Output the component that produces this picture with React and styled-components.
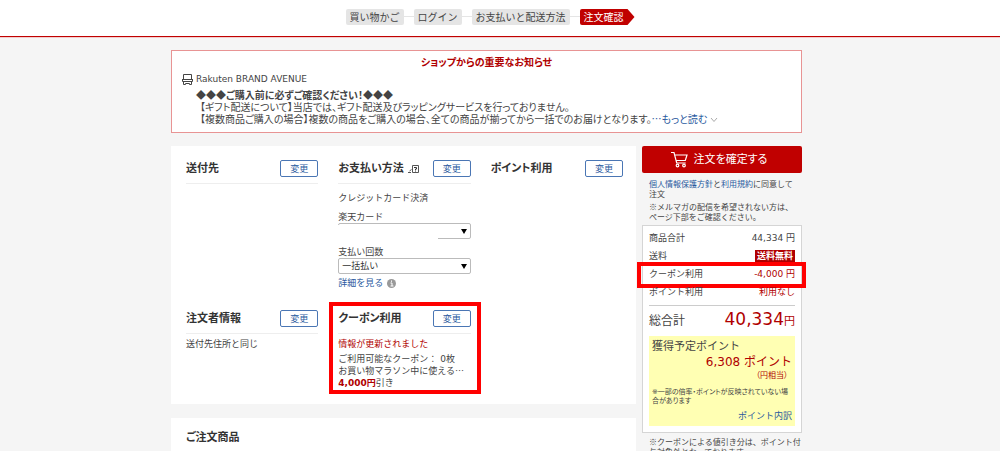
import React from "react";
import styled, { createGlobalStyle } from "styled-components";

const GlobalStyle = createGlobalStyle`
  * {
    box-sizing: border-box;
  }

  body {
    margin: 0;
    background: #f5f5f5;
    color: #444;
    font-family: "DejaVu Sans", "Noto Sans CJK JP", sans-serif;
    font-size: 9px;
    line-height: 12px;
  }

  h2, p, dl, dd, ol {
    margin: 0;
    padding: 0;
  }

  button, select {
    font: inherit;
  }

  a {
    color: #2a5a9e;
    text-decoration: none;
  }
`;

const Page = styled.div`
  height: 100vh;
  overflow: hidden;
`;

const Header = styled.header`
  display: flex;
  justify-content: center;
  height: 37px;
  padding: 9px 20px 0 0;
  background: #fff;
  border-bottom: 1px solid #c00000;
  box-shadow: 0 0 0 1px #f3cccc;
`;

const Steps = styled.ol`
  display: flex;
  list-style: none;
  font-family: "Noto Sans CJK JP", sans-serif;
  font-size: 10px;
  line-height: 16px;
`;

const Step = styled.li`
  display: flex;
  align-items: flex-start;

  & + &::before {
    content: "";
    width: 10px;
    height: 1px;
    margin-top: 7px;
    background: #e5e5e5;
  }
`;

const StepLabel = styled.span`
  padding: 0 4px;
  border-radius: 2px;
  background: #e5e5e5;
`;

const CurrentStep = styled(StepLabel)`
  padding-right: 11px;
  background: #c00000;
  color: #fff;
  clip-path: polygon(0 0, calc(100% - 7px) 0, 100% 50%, calc(100% - 7px) 100%, 0 100%);
`;

// O conteúdo fica um pouco à esquerda do centro
const Content = styled.main`
  max-width: 658px;
  margin: 0 auto;
  padding: 13px 27px 0 0;
`;

const Notice = styled.section`
  padding: 6px 10px 7px;
  border: 1px solid #e89494;
  background: #fff;
`;

const NoticeTitle = styled.h2`
  color: #b00000;
  font-size: 10px;
  line-height: 12px;
  font-feature-settings: "palt";
  text-align: center;
`;

const ShopName = styled.p`
  display: flex;
  align-items: center;
  gap: 3px;
  margin-top: 4px;
`;

const NoticeText = styled.div`
  margin: 4px 0 0 14px;
  font-family: "Noto Sans CJK JP", sans-serif;
  font-size: 10px;
  line-height: 12px;
  font-feature-settings: "palt";
  white-space: nowrap;
`;

const NoticeLine = styled.p`
  padding-left: 4px;
`;

const Columns = styled.div`
  display: grid;
  grid-template-columns: minmax(0, 1fr) 160px;
  gap: 6px;
  align-items: start;
  margin-top: 13px;
`;

const Card = styled.section`
  padding: 14px 13px 14px 15px;
  background: #fff;

  & + & {
    margin-top: 14px;
    padding-top: 12px;
  }
`;

const SettingsGrid = styled.div`
  display: grid;
  grid-template-columns: repeat(3, minmax(0, 1fr));
  grid-template-rows: minmax(150px, auto) minmax(80px, auto);
  column-gap: 20px;
`;

const Setting = styled.section`
  position: relative;
`;

const SettingHead = styled.div`
  display: flex;
  align-items: center;
  gap: 4px;
  padding-bottom: 6px;
  border-bottom: 1px solid ${(props) => (props.$plain ? "transparent" : "#eee")};
`;

const Heading = styled.h2`
  color: #333;
  font-size: 11px;
  line-height: 16px;
  font-feature-settings: "palt";
`;

const ChangeButton = styled.button`
  width: 38px;
  height: 17px;
  margin-left: auto;
  padding: 0;
  border: 1px solid #4a76b4;
  border-radius: 2px;
  background: #fff;
  color: #2a5a9e;
  line-height: 14px;
`;

const Text = styled.p`
  margin-top: ${(props) => props.$top || 0}px;
  white-space: nowrap;
`;

const Ellipsis = styled.span`
  font-family: "Noto Sans CJK JP", sans-serif;
`;

const Field = styled.label`
  display: block;
  margin-top: ${(props) => props.$top}px;
`;

const SelectBox = styled.span`
  display: block;
  position: relative;

  &::after {
    content: "";
    position: absolute;
    top: 6px;
    right: 4px;
    border: 3px solid transparent;
    border-top: 5px solid #000;
    border-bottom: 0;
  }
`;

const Select = styled.select`
  display: block;
  width: 100%;
  height: 16px;
  padding: 0 3px;
  appearance: none;
  border: 1px solid #bbb;
  border-radius: 2px;
  background: #fff;
  color: #333;
`;

// Cobre a parte oculta do cartão
const Mask = styled.span`
  position: absolute;
  top: 2px;
  left: 0;
  width: 100px;
  height: 14px;
  background: #fff;
`;

const DetailLink = styled.a`
  display: inline-flex;
  align-items: center;
  gap: 4px;
  margin-top: 3px;
`;

const Alert = styled.span`
  color: #b00000;
`;

const Highlight = styled.span`
  position: absolute;
  inset: ${(props) => props.$inset};
  border: 4px solid #f00;
  pointer-events: none;
`;

const OrderButton = styled.button`
  display: flex;
  align-items: center;
  justify-content: center;
  gap: 6px;
  width: 100%;
  height: 27px;
  padding: 0 12px 0 6px;
  border: 0;
  border-radius: 2px;
  background: #c00000;
  color: #fff;
  font-size: 11px;
  font-feature-settings: "palt";
`;

const SideText = styled.p`
  margin: ${(props) => props.$top}px 0 0 7px;
  font-family: "Noto Sans CJK JP", sans-serif;
  font-size: 8px;
  line-height: 10px;
`;

const Summary = styled.div`
  margin-top: 3px;
  padding: 3px 6px 6px;
  border: 1px solid #d5d5d5;
  background: #fff;
`;

const SummaryRow = styled.div`
  position: relative;
  display: flex;
  justify-content: space-between;
  align-items: center;
  height: 18px;
`;

const FreeShipping = styled.strong`
  padding: 0 2px;
  background: #b00000;
  color: #fff;
`;

const TotalRow = styled(SummaryRow)`
  height: 30px;
  margin-top: 4px;
  border-top: 1px solid #ccc;
  font-size: 12px;
`;

const Total = styled.span`
  color: #b00000;
  font-size: 17px;

  small {
    font-size: 11px;
  }
`;

const Points = styled.div`
  display: flex;
  flex-direction: column;
  margin-top: 1px;
  padding: 4px 3px;
  background: #ffffb3;
  font-size: 7px;
  line-height: 9px;
`;

const PointsTitle = styled.p`
  font-size: 11px;
  line-height: 14px;
`;

const PointsValue = styled.p`
  color: #b00000;
  font-size: 12px;
  line-height: 17px;
  text-align: right;
`;

const PointsUnit = styled.p`
  padding-right: 4px;
  color: #b00000;
  font-size: 8px;
  line-height: 10px;
  font-feature-settings: "palt";
  text-align: right;
`;

const PointsNote = styled.p`
  margin-top: 7px;
  font-feature-settings: "palt";
`;

const PointsLink = styled.a`
  margin-top: 4px;
  font-size: 9px;
  line-height: 12px;
  text-align: right;
`;

const ShopIcon = () => (
  <svg width="11" height="11" viewBox="0 0 11 11" fill="none" stroke="#444">
    <path d="M1.500 6V.5h8V6M.5 5v2.500h10V5M0 5.500h11M1.500 7.500v3h2v-1h4v1h2v-3" />
  </svg>
);

const HelpIcon = () => (
  <svg width="11" height="10" viewBox="0 0 11 10" fill="none" stroke="#555">
    <path d="M0 8.500h3M1.500 7l2-1.500M4.500 1.500h6v7h-6z" />
    <path d="M6 3.500h2.500v1.500h-1v1M7 7h1" stroke="#333" />
  </svg>
);

const InfoIcon = () => (
  <svg width="9" height="9" viewBox="0 0 9 9">
    <circle cx="4.500" cy="4.500" r="4.500" fill="#999" />
    <path d="M3.500 4h1.500v3M3.500 7h3M4.500 1.500v1.300" stroke="#fff" fill="none" />
  </svg>
);

const CartIcon = () => (
  <svg width="17" height="17" viewBox="0 0 17 17" fill="none" stroke="#fff" strokeWidth="1.200">
    <path d="M0 1.500h3l2.700 10.500h9M3.700 4h12.300l-1.700 5.500H5.200" />
    <circle cx="6.500" cy="14.500" r="1.300" />
    <circle cx="13" cy="14.500" r="1.300" />
  </svg>
);

const ChevronIcon = () => (
  <svg width="8" height="6" viewBox="0 0 8 6" fill="none" stroke="#aaa">
    <path d="M1 1l3 3.500L7 1" />
  </svg>
);

const SettingHeader = ({ title, icon, plain }) => (
  <SettingHead $plain={plain}>
    <Heading>{title}</Heading>
    {icon}
    <ChangeButton type="button">変更</ChangeButton>
  </SettingHead>
);

const App = () => {
  return (
    <Page>
      <GlobalStyle />
      <Header>
        <Steps>
          <Step><StepLabel>買い物かご</StepLabel></Step>
          <Step><StepLabel>ログイン</StepLabel></Step>
          <Step><StepLabel>お支払いと配送方法</StepLabel></Step>
          <Step><CurrentStep>注文確認</CurrentStep></Step>
        </Steps>
      </Header>
      <Content>
        <Notice>
          <NoticeTitle>ショップからの重要なお知らせ</NoticeTitle>
          <ShopName><ShopIcon />Rakuten BRAND AVENUE</ShopName>
          <NoticeText>
            <p><strong>◆◆◆ご購入前に必ずご確認ください！◆◆◆</strong></p>
            <NoticeLine>【ギフト配送について】当店では、ギフト配送及びラッピングサービスを行っておりません。</NoticeLine>
            <NoticeLine>
              【複数商品ご購入の場合】複数の商品をご購入の場合、全ての商品が揃ってから一括でのお届けとなります。<a href="#more">…もっと読む <ChevronIcon /></a>
            </NoticeLine>
          </NoticeText>
        </Notice>

        <Columns>
          <div>
            <Card>
              <SettingsGrid>
                <Setting>
                  <SettingHeader title="送付先" />
                </Setting>
                <Setting>
                  <SettingHeader title="お支払い方法" icon={<HelpIcon />} />
                  <Text $top={8}>クレジットカード決済</Text>
                  <Field $top={7}>
                    楽天カード
                    <SelectBox>
                      <Select />
                      <Mask />
                    </SelectBox>
                  </Field>
                  <Field $top={7}>
                    支払い回数
                    <SelectBox>
                      <Select defaultValue="1">
                        <option value="1">一括払い</option>
                      </Select>
                    </SelectBox>
                  </Field>
                  <DetailLink href="#detail">詳細を見る <InfoIcon /></DetailLink>
                </Setting>
                <Setting>
                  <SettingHeader title="ポイント利用" plain />
                </Setting>
                <Setting>
                  <SettingHeader title="注文者情報" />
                  <Text $top={4}>送付先住所と同じ</Text>
                </Setting>
                <Setting>
                  <SettingHeader title="クーポン利用" />
                  <Text $top={4}><Alert>情報が更新されました</Alert></Text>
                  <Text $top={3}>ご利用可能なクーポン： 0枚</Text>
                  <Text>お買い物マラソン中に使える<Ellipsis>…</Ellipsis></Text>
                  <Text><Alert as="strong">4,000円</Alert>引き</Text>
                  <Highlight $inset="-8px -10px -4px -9px" />
                </Setting>
              </SettingsGrid>
            </Card>
            <Card>
              <Heading>ご注文商品</Heading>
            </Card>
          </div>

          <aside>
            <OrderButton type="button"><CartIcon />注文を確定する</OrderButton>
            <SideText $top={6}>
              <a href="#privacy">個人情報保護方針</a>と<a href="#terms">利用規約</a>に同意して<br />注文
            </SideText>
            <SideText $top={3}>※メルマガの配信を希望されない方は、<br />ページ下部をご確認ください。</SideText>
            <Summary>
              <SummaryRow><span>商品合計</span><span>44,334 円</span></SummaryRow>
              <SummaryRow><span>送料</span><FreeShipping>送料無料</FreeShipping></SummaryRow>
              <SummaryRow>
                <span>クーポン利用</span><Alert>-4,000 円</Alert>
                <Highlight $inset="-3px -11px -5px -12px" />
              </SummaryRow>
              <SummaryRow><span>ポイント利用</span><Alert>利用なし</Alert></SummaryRow>
              <TotalRow><span>総合計</span><Total>40,334<small>円</small></Total></TotalRow>
              <Points>
                <PointsTitle>獲得予定ポイント</PointsTitle>
                <PointsValue>6,308 ポイント</PointsValue>
                <PointsUnit>（円相当）</PointsUnit>
                <PointsNote>※一部の倍率・ポイントが反映されていない場合があります</PointsNote>
                <PointsLink href="#points">ポイント内訳</PointsLink>
              </Points>
            </Summary>
            <SideText $top={4}>※クーポンによる値引き分は、ポイント付与対象外となっております。</SideText>
          </aside>
        </Columns>
      </Content>
    </Page>
  );
};

export default App;
